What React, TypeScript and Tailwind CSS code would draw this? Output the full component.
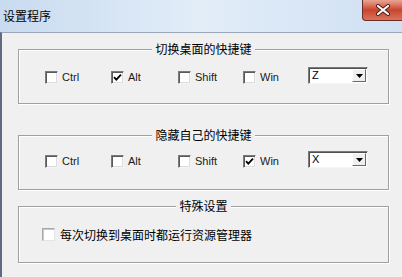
import React from "react";

const cjk = { fontFamily: '"Noto Sans CJK SC", "Liberation Sans", sans-serif' };
const latin = { fontFamily: '"Liberation Sans", Arial, sans-serif' };

function Box({ checked, faint }: { checked?: boolean; faint?: boolean }) {
    return (
        <div
            className={
                "w-[13px] h-[13px] shrink-0 bg-white flex items-center justify-center border " +
                (faint
                    ? "border-t-[#a8a8a8] border-l-[#a8a8a8] border-r-[#e4e4e4] border-b-[#e4e4e4] shadow-[inset_1px_1px_0_#c8c8c8]"
                    : "border-t-[#7a7a7a] border-l-[#7a7a7a] border-r-[#f4f4f4] border-b-[#f4f4f4] shadow-[inset_1px_1px_0_#5a5a5a,inset_-1px_-1px_0_#dcdcdc]")
            }
        >
            {checked && (
                <svg width="9" height="9" viewBox="0 0 9 9">
                    <path d="M1 4.2 L3.3 6.6 L8 1.6" fill="none" stroke="#000" strokeWidth="1.8" />
                </svg>
            )}
        </div>
    );
}

function Check({ label, checked, width }: { label: string; checked?: boolean; width: string }) {
    return (
        <div className={"flex items-center gap-[4px] " + width}>
            <Box checked={checked} />
            <span className="text-[11px] leading-[13px] text-[#1a1a1a]" style={latin}>
                {label}
            </span>
        </div>
    );
}

function Combo({ value }: { value: string }) {
    return (
        <div className="w-[60px] h-[17px] flex bg-white border border-t-[#7a7a7a] border-l-[#7a7a7a] border-r-[#f4f4f4] border-b-[#f4f4f4] shadow-[inset_1px_1px_0_#505050]">
            <span className="flex-1 pl-[3px] pt-[1px] text-[11px] leading-[13px] text-black" style={latin}>
                {value}
            </span>
            <div className="w-[14px] my-[1px] mr-[1px] bg-[#f0f0f0] flex items-center justify-center border border-t-white border-l-white border-r-[#6a6a6a] border-b-[#6a6a6a]">
                <svg width="7" height="4" viewBox="0 0 7 4">
                    <path d="M0 0 H7 L3.5 4 Z" fill="#000" />
                </svg>
            </div>
        </div>
    );
}

function Group({
    title,
    height,
    children,
}: {
    title: string;
    height: string;
    children: React.ReactNode;
}) {
    return (
        <div
            className={
                "flex flex-col border border-[#a0a0a0] shadow-[1px_1px_0_#ffffff,inset_1px_1px_0_#ffffff] " + height
            }
        >
            <div
                className="-mt-[9px] h-[16px] self-center bg-[#f0f0f0] px-[3px] text-[12px] leading-[16px] text-black"
                style={cjk}
            >
                {title}
            </div>
            {children}
        </div>
    );
}

export default function App() {
    return (
        <div className="w-[402px] h-[277px] flex flex-col overflow-hidden select-none">
            <div className="h-[32px] flex justify-between bg-gradient-to-r from-[#c9dbf0] via-[#e2edf8] to-[#d0e0f3]">
                <span className="pl-[3px] pt-[8px] text-[12px] leading-[16px] text-black" style={cjk}>
                    设置程序
                </span>
                <div className="w-[40px] h-[21px] rounded-bl-[4px] border border-t-0 border-r-0 border-[#6b2e26] bg-gradient-to-b from-[#e9a593] via-[#c9432c] to-[#d8735a] flex items-center justify-center">
                    <svg width="16" height="12" viewBox="0 0 16 12">
                        <path d="M3 2 L13 10 M13 2 L3 10" stroke="#4a1a14" strokeWidth="4" strokeLinecap="round" />
                        <path d="M3 2 L13 10 M13 2 L3 10" stroke="#ffffff" strokeWidth="2.2" strokeLinecap="round" />
                    </svg>
                </div>
            </div>

            <div className="flex-1 flex flex-col bg-[#f0f0f0] border-l-2 border-t border-l-[#5e6b80] border-t-[#9aa7b8] pl-[16px] pr-[13px]">
                <div className="mt-[16px]">
                    <Group title="切换桌面的快捷键" height="h-[55px]">
                        <div className="mt-[10px] flex items-end pl-[26px]">
                            <Check label="Ctrl" width="w-[66px]" />
                            <Check label="Alt" checked width="w-[67px]" />
                            <Check label="Shift" width="w-[65px]" />
                            <Check label="Win" width="w-[65px]" />
                            <Combo value="Z" />
                        </div>
                    </Group>
                </div>

                <div className="mt-[31px]">
                    <Group title="隐藏自己的快捷键" height="h-[55px]">
                        <div className="mt-[8px] flex items-end pl-[26px]">
                            <Check label="Ctrl" width="w-[66px]" />
                            <Check label="Alt" width="w-[67px]" />
                            <Check label="Shift" width="w-[65px]" />
                            <Check label="Win" checked width="w-[65px]" />
                            <Combo value="X" />
                        </div>
                    </Group>
                </div>

                <div className="mt-[16px]">
                    <Group title="特殊设置" height="h-[57px]">
                        <div className="mt-[14px] flex items-center gap-[5px] pl-[23px]">
                            <Box faint />
                            <span className="text-[12px] leading-[13px] text-black" style={cjk}>
                                每次切换到桌面时都运行资源管理器
                            </span>
                        </div>
                    </Group>
                </div>
            </div>
        </div>
    );
}
